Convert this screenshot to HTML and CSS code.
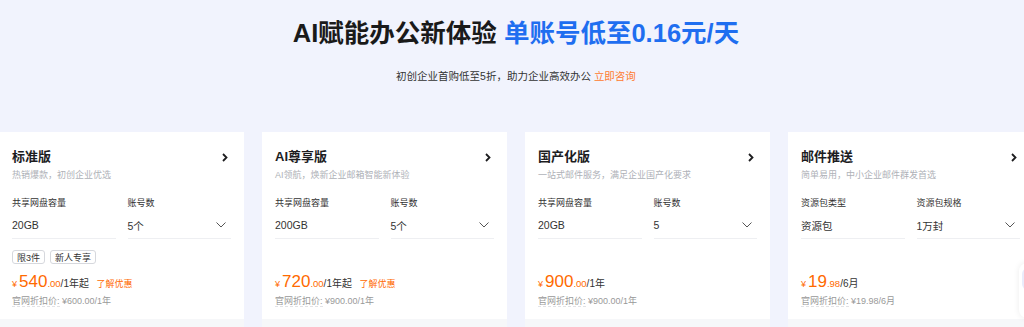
FILE: index.html
```html
<!DOCTYPE html>
<html>
<head>
  <meta charset="utf-8">
  <link rel="stylesheet" href="styles.css">
</head>
<body>
  <div class="page">
    <div class="hero">
      <h1>AI赋能办公新体验 <span class="hero-blue">单账号低至0.16元/天</span></h1>
      <p class="hero-sub">初创企业首购低至5折，助力企业高效办公 <a class="hero-link">立即咨询</a></p>
    </div>

    <div class="cards">
      <div class="card">
        <div class="card-body">
          <div class="card-head">
            <h2>标准版</h2>
            <svg class="arrow" width="6" height="9" viewBox="0 0 6 9"><path d="M1 1 L4.5 4.5 L1 8" fill="none" stroke="#1d1d1f" stroke-width="1.8"/></svg>
          </div>
          <div class="card-desc">热销爆款，初创企业优选</div>
          <div class="specs">
            <div class="spec">
              <div class="spec-label">共享网盘容量</div>
              <div class="spec-value">20GB</div>
            </div>
            <div class="spec">
              <div class="spec-label">账号数</div>
              <div class="spec-value">5个
                <svg class="drop" width="10" height="6" viewBox="0 0 10 6"><path d="M0.5 0.5 L5 5 L9.5 0.5" fill="none" stroke="#555" stroke-width="1"/></svg>
              </div>
            </div>
          </div>
          <div class="tags">
            <span class="tag">限3件</span>
            <span class="tag">新人专享</span>
          </div>
          <div class="price">
            <span class="yen">¥</span><span class="big">540</span><span class="cents">.00</span><span class="unit">/1年起</span>
            <span class="promo">了解优惠</span>
          </div>
          <div class="origin"><span class="origin-label">官网折扣价:</span> ¥600.00/1年</div>
        </div>
        <div class="card-foot"></div>
      </div>

      <div class="card">
        <div class="card-body">
          <div class="card-head">
            <h2>AI尊享版</h2>
            <svg class="arrow" width="6" height="9" viewBox="0 0 6 9"><path d="M1 1 L4.5 4.5 L1 8" fill="none" stroke="#1d1d1f" stroke-width="1.8"/></svg>
          </div>
          <div class="card-desc">AI领航，焕新企业邮箱智能新体验</div>
          <div class="specs">
            <div class="spec">
              <div class="spec-label">共享网盘容量</div>
              <div class="spec-value">200GB</div>
            </div>
            <div class="spec">
              <div class="spec-label">账号数</div>
              <div class="spec-value">5个
                <svg class="drop" width="10" height="6" viewBox="0 0 10 6"><path d="M0.5 0.5 L5 5 L9.5 0.5" fill="none" stroke="#555" stroke-width="1"/></svg>
              </div>
            </div>
          </div>
          <div class="tags"></div>
          <div class="price">
            <span class="yen">¥</span><span class="big">720</span><span class="cents">.00</span><span class="unit">/1年起</span>
            <span class="promo">了解优惠</span>
          </div>
          <div class="origin"><span class="origin-label">官网折扣价:</span> ¥900.00/1年</div>
        </div>
        <div class="card-foot"></div>
      </div>

      <div class="card">
        <div class="card-body">
          <div class="card-head">
            <h2>国产化版</h2>
            <svg class="arrow" width="6" height="9" viewBox="0 0 6 9"><path d="M1 1 L4.5 4.5 L1 8" fill="none" stroke="#1d1d1f" stroke-width="1.8"/></svg>
          </div>
          <div class="card-desc">一站式邮件服务，满足企业国产化要求</div>
          <div class="specs">
            <div class="spec">
              <div class="spec-label">共享网盘容量</div>
              <div class="spec-value">20GB</div>
            </div>
            <div class="spec">
              <div class="spec-label">账号数</div>
              <div class="spec-value">5
                <svg class="drop" width="10" height="6" viewBox="0 0 10 6"><path d="M0.5 0.5 L5 5 L9.5 0.5" fill="none" stroke="#555" stroke-width="1"/></svg>
              </div>
            </div>
          </div>
          <div class="tags"></div>
          <div class="price">
            <span class="yen">¥</span><span class="big">900</span><span class="cents">.00</span><span class="unit">/1年</span>
          </div>
          <div class="origin"><span class="origin-label">官网折扣价:</span> ¥900.00/1年</div>
        </div>
        <div class="card-foot"></div>
      </div>

      <div class="card">
        <div class="card-body">
          <div class="card-head">
            <h2>邮件推送</h2>
            <svg class="arrow" width="6" height="9" viewBox="0 0 6 9"><path d="M1 1 L4.5 4.5 L1 8" fill="none" stroke="#1d1d1f" stroke-width="1.8"/></svg>
          </div>
          <div class="card-desc">简单易用，中小企业邮件群发首选</div>
          <div class="specs">
            <div class="spec">
              <div class="spec-label">资源包类型</div>
              <div class="spec-value">资源包</div>
            </div>
            <div class="spec">
              <div class="spec-label">资源包规格</div>
              <div class="spec-value">1万封
                <svg class="drop" width="10" height="6" viewBox="0 0 10 6"><path d="M0.5 0.5 L5 5 L9.5 0.5" fill="none" stroke="#555" stroke-width="1"/></svg>
              </div>
            </div>
          </div>
          <div class="tags"></div>
          <div class="price">
            <span class="yen">¥</span><span class="big">19</span><span class="cents">.98</span><span class="unit">/6月</span>
          </div>
          <div class="origin"><span class="origin-label">官网折扣价:</span> ¥19.98/6月</div>
        </div>
        <div class="card-foot"></div>
      </div>
    </div>
  </div>

  <div class="float-box"><div class="float-icon"></div></div>
</body>
</html>
```

FILE: styles.css
```css
body {
  margin: 0;
  background: #f1f3fd;
  font-family: 'Liberation Sans', 'Noto Sans CJK SC', sans-serif;
  color: #1d1d1f;
  overflow: hidden;
}

.page {
  width: 1034px;
  margin-left: -1px;
}

.hero {
  text-align: center;
  padding-top: 16px;
}

.hero h1 {
  margin: 0;
  font-size: 25.5px;
  line-height: 34px;
  font-weight: bold;
  color: #1a1a1a;
}

.hero-blue {
  color: #1f6ef0;
}

.hero-sub {
  margin: 18px 0 0;
  font-size: 10.5px;
  line-height: 16px;
  color: #333;
}

.hero-link {
  color: #ff7a2e;
}

.cards {
  display: flex;
  gap: 18px;
  margin-top: 48px;
}

.card {
  width: 245px;
  flex-shrink: 0;
  background: #fff;
}

.card-body {
  padding: 16px 13px 11px;
}

.card-head {
  display: flex;
  justify-content: space-between;
  align-items: center;
  padding-right: 3px;
}

.card-head h2 {
  margin: 0;
  font-size: 13px;
  line-height: 18px;
  font-weight: bold;
  color: #1d1d1f;
}

.card-desc {
  margin-top: 3px;
  font-size: 9px;
  line-height: 13px;
  color: #aeb1b7;
}

.specs {
  display: flex;
  gap: 12px;
  margin-top: 15px;
}

.spec {
  flex: 1;
}

.spec-label {
  font-size: 9px;
  line-height: 13px;
  color: #333;
}

.spec-value {
  margin-top: 2px;
  height: 26px;
  display: flex;
  align-items: center;
  justify-content: space-between;
  font-size: 10.5px;
  color: #333;
  border-bottom: 1px solid #eeeff2;
}

.drop {
  margin-right: 5px;
}

.tags {
  display: flex;
  gap: 5px;
  height: 14px;
  margin-top: 11px;
}

.tag {
  display: flex;
  align-items: center;
  padding: 0 4px;
  font-size: 9px;
  color: #333;
  border: 1px solid #d6d8dd;
  border-radius: 3px;
  box-sizing: border-box;
  height: 14px;
}

.price {
  margin-top: 8px;
  line-height: 20px;
  height: 20px;
  white-space: nowrap;
}

.yen {
  font-size: 9px;
  color: #ff6a00;
  margin-right: 2px;
}

.big {
  font-size: 17px;
  color: #ff6a00;
}

.cents {
  font-size: 9.5px;
  color: #ff6a00;
}

.unit {
  font-size: 10px;
  color: #333;
}

.promo {
  margin-left: 3px;
  font-size: 9px;
  color: #ff6a00;
}

.origin {
  margin-top: 3px;
  font-size: 9px;
  line-height: 13px;
  color: #999;
}

.origin-label {
  border-bottom: 1px dashed #e2e3e6;
}

.card-foot {
  height: 20px;
  background: #f6f7f9;
}

.float-box {
  position: absolute;
  left: 1019px;
  top: 263px;
  width: 40px;
  height: 55px;
  background: #fff;
  border-radius: 8px;
  box-shadow: 0 0 6px rgba(0,0,0,0.08);
}

.float-icon {
  margin: 5px 0 0 3px;
  width: 20px;
  height: 22px;
  border-radius: 6px;
  background: #e9ecfb;
}
```
